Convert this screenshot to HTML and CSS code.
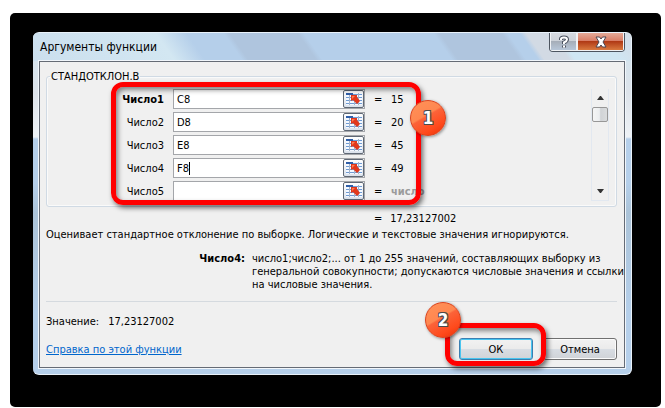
FILE: index.html
```
<!DOCTYPE html>
<html lang="ru">

<head>
  <title>Аргументы функции</title>
  <meta charset="UTF-8">
  <meta name="viewport" content="width=device-width, initial-scale=1">
  <link rel="stylesheet" href="styles.css">
</head>

<body>
  <svg class="defs" width="0" height="0" aria-hidden="true">
    <symbol id="ref" viewBox="0 0 16 12">
      <rect width="16" height="12" fill="#f4f8ff"/>
      <path d="M0 0h7v2H0z" fill="#2f5ea8"/>
      <path d="M7 1.5h9M0 4.5h16M0 7.5h16M0 10.5h16" stroke="#6f9bd3"/>
      <path d="M3.5 2v10M8.500 2v10M12.500 0v12" stroke="#a3b4ca"/>
      <path d="M5 2h6v2l3 4-3 3-4-4-2 1z" fill="#e2381c"/>
      <path d="M6 3h3l-3 3z" fill="#ff7c50"/>
    </symbol>
  </svg>

  <main class="desktop">
    <section class="dialog">
      <header class="titlebar">
        <h1>Аргументы функции</h1>
        <div class="window-buttons">
          <button class="help" aria-label="Справка">
            <svg width="12" height="14" viewBox="0 0 12 14"><path d="M3 5V4q0-1.500 3-1.500t3 2q0 1.500-3 3V9M6 10.500v2" fill="none" stroke="#4b5260" stroke-width="4"/><path d="M3 5V4q0-1.500 3-1.500t3 2q0 1.500-3 3V9M6 10.500v2" fill="none" stroke="#fff" stroke-width="2"/></svg>
          </button>
          <button class="close" aria-label="Закрыть">
            <svg width="14" height="12" viewBox="0 0 14 12"><path d="M2 1h3.500L7 3l1.500-2H12L9 6l3 5H8.500L7 9l-1.500 2H2l3-5z" fill="#fff" stroke="#4d4652"/></svg>
          </button>
        </div>
      </header>

      <div class="client">
        <fieldset class="group">
          <legend>СТАНДОТКЛОН.В</legend>
          <div class="args">
            <div class="arg">
              <label class="required" for="n1">Число1</label>
              <div class="field"><input id="n1" type="text" value="C8"><button aria-label="Выбрать диапазон 1"><svg class="ref"><use href="#ref"/></svg></button></div>
              <span>=</span><output for="n1">15</output>
            </div>
            <div class="arg">
              <label for="n2">Число2</label>
              <div class="field"><input id="n2" type="text" value="D8"><button aria-label="Выбрать диапазон 2"><svg class="ref"><use href="#ref"/></svg></button></div>
              <span>=</span><output for="n2">20</output>
            </div>
            <div class="arg">
              <label for="n3">Число3</label>
              <div class="field"><input id="n3" type="text" value="E8"><button aria-label="Выбрать диапазон 3"><svg class="ref"><use href="#ref"/></svg></button></div>
              <span>=</span><output for="n3">45</output>
            </div>
            <div class="arg">
              <label for="n4">Число4</label>
              <div class="field"><input id="n4" type="text" value="F8"><i class="caret"></i><button aria-label="Выбрать диапазон 4"><svg class="ref"><use href="#ref"/></svg></button></div>
              <span>=</span><output for="n4">49</output>
            </div>
            <div class="arg">
              <label for="n5">Число5</label>
              <div class="field"><input id="n5" type="text"><button aria-label="Выбрать диапазон 5"><svg class="ref"><use href="#ref"/></svg></button></div>
              <span>=</span><output class="empty" for="n5">число</output>
            </div>
            <div class="mark mark-args"><b class="badge">1</b></div>
          </div>
          <div class="scrollbar">
            <button aria-label="Вверх"><svg width="7" height="4" viewBox="0 0 7 4"><path d="M0 4l3-4h1l3 4z" fill="#333"/></svg></button>
            <div class="thumb"></div>
            <button class="down" aria-label="Вниз"><svg width="7" height="4" viewBox="0 0 7 4"><path d="M0 0l3 4h1l3-4z" fill="#333"/></svg></button>
          </div>
        </fieldset>

        <div class="total"><span>=</span><output>17,23127002</output></div>
        <p class="about">Оценивает стандартное отклонение по выборке. Логические и текстовые значения игнорируются.</p>
        <div class="hint">
          <b>Число4:</b>
          <p>число1;число2;... от 1 до 255 значений, составляющих выборку из<br>генеральной совокупности; допускаются числовые значения и ссылки<br>на числовые значения.</p>
        </div>

        <div class="value"><span>Значение:</span><output>17,23127002</output></div>
        <footer class="footer">
          <a href="#">Справка по этой функции</a>
          <div class="actions">
            <div class="ok-wrap">
              <button class="btn btn-ok">ОК</button>
              <div class="mark mark-ok"><b class="badge">2</b></div>
            </div>
            <button class="btn">Отмена</button>
          </div>
        </footer>
      </div>
    </section>
  </main>
</body>
</html>
```
FILE: styles.css
```
*{
  box-sizing:border-box;
}

body{
  margin:0;
  padding:13px 4px 1px 10px;
  background:#fff;
  color:#000;
  font:11px/13px "DejaVu Sans Condensed", "DejaVu Sans", sans-serif;
}

button,
input{
  font:inherit;
  color:inherit;
  margin:0;
  padding:0;
}

p{
  margin:0;
}

.defs{
  position:absolute;
}

.desktop{
  padding:19px 29px 32px 23px;
  background:#000;
  border-radius:5px;
}

.dialog{
  padding:0 6px 6px;
  border:1px solid #e9f2fa;
  border-width:1px 1px 1px 0;
  border-radius:6px;
  background:linear-gradient(to bottom, #d0e4f0 0, #dde3ea 60px, #eef2f6 104px, #b5cfea 106px, #b5cfea 150px, #abc3d8 180px, #b5cfea 280px);
}

/* title bar */
.titlebar{
  display:flex;
  justify-content:space-between;
  height:28px;
  margin:0 -6px;
  padding:0 6px 0 7px;
  border-radius:5px 5px 0 0;
  background:linear-gradient(55deg, #cbdfee 0, #d3e7f2 23%, #b5cfea 28%, #b5cfea 34%, #afc5de 35%, #afc5de 46%, #b5cfea 47%, #b5cfea 68%, #afc5de 69%, #afc5de 79%, #b5cfea 80%, #b5cfea 82%, #d2dae4 83%, #d2dae4 87%, #cfe6f3 88%, #cfe6f3 95%, #d5dce6 100%);
}
.titlebar h1{
  margin:0;
  font-size:12px;
  font-weight:normal;
  line-height:29px;
}

.window-buttons{
  display:flex;
  height:19px;
  border:1px solid #4d5560;
  border-top:0;
  border-radius:0 0 4px 4px;
  overflow:hidden;
}
.window-buttons button{
  display:flex;
  align-items:center;
  justify-content:center;
  border:1px solid #f0f2f5;
  border-top:0;
}
.help{
  width:27px;
  background:linear-gradient(#d6dae0 0, #cdd2d9 45%, #a6aeb9 50%, #b7c6d8 100%);
}
.close{
  width:47px;
  background:linear-gradient(#e5aa98 0, #d97f68 45%, #b13a16 50%, #d9793f 100%);
}

/* dialog body */
.client{
  padding:8px 7px 7px 6px;
  border:1px solid #656b75;
  box-shadow:0 0 0 1px #f1f6fb;
  background:#f0f0f0;
}

.group{
  display:flex;
  justify-content:space-between;
  min-width:0;
  margin:0;
  padding:6px 7px 5px 73px;
  border:1px solid #d0dae4;
  border-radius:3px;
  box-shadow:inset 0 0 0 1px #fafafa;
}
.group legend{
  height:13px;
  margin-left:-70px;
  padding:0 1px;
}

.args{
  position:relative;
  display:grid;
  gap:3px;
}
.arg{
  display:grid;
  grid-template-columns:44px 192px 8px 30px;
  column-gap:9px;
  align-items:center;
  height:20px;
}
.arg label{
  text-align:right;
}
.required{
  font-weight:bold;
}
.field{
  display:flex;
  align-items:center;
  height:20px;
  border:1px solid #a4a6aa;
  background:#fff;
}
.field input{
  flex:1;
  min-width:0;
  height:18px;
  padding-left:3px;
  border:0;
  outline:0;
  background:none;
}
.caret{
  position:absolute;
  left:69px;
  width:1px;
  height:13px;
  background:#000;
}
.field button{
  display:flex;
  align-items:center;
  justify-content:center;
  width:21px;
  height:18px;
  border:1px solid #5f6875;
  border-radius:2px;
  background:linear-gradient(#fff, #dbe2ec);
}
.ref{
  width:16px;
  height:12px;
}
.empty{
  color:#9b9b9b;
  font-weight:bold;
}

.scrollbar{
  display:flex;
  flex-direction:column;
  width:18px;
  border:1px solid #e2e8f0;
  border-top:0;
}
.scrollbar button{
  display:flex;
  align-items:center;
  justify-content:center;
  height:18px;
  border:0;
  background:none;
}
.scrollbar .down{
  margin-top:auto;
}
.thumb{
  height:15px;
  border:1px solid #979797;
  border-radius:2px;
  background:linear-gradient(to right, #f5f5f5 0, #eceef0 45%, #d0d3d6 55%, #dadcdd 100%);
}

.total{
  display:flex;
  gap:8px;
  margin-top:5px;
  padding-left:328px;
}
.about{
  margin-top:3px;
}
.hint{
  display:grid;
  grid-template-columns:199px 1fr;
  column-gap:7px;
  min-height:50px;
  margin-top:11px;
  border-bottom:1px solid #d5dadf;
}
.hint b{
  text-align:right;
}
.hint p{
  white-space:nowrap;
}
.value{
  display:flex;
  gap:9px;
  margin-top:13px;
}

.footer{
  display:flex;
  align-items:center;
  justify-content:space-between;
  margin-top:10px;
}
.footer a{
  color:#0066cc;
}
.actions{
  display:flex;
  gap:10px;
}
.ok-wrap{
  position:relative;
}
.btn{
  width:74px;
  height:22px;
  border:1px solid #707070;
  border-radius:3px;
  box-shadow:inset 0 0 0 1px #fbfbfb;
  background:linear-gradient(#f2f2f2 0, #ebebeb 48%, #d8dde3 52%, #d0d3d7 100%);
}
.btn-ok{
  border-color:#3c7fb1;
  box-shadow:inset 0 0 0 1px #48c5f0;
}

/* numbered callouts */
.mark{
  position:absolute;
  border:5px solid #f00;
  border-radius:12px;
  box-shadow:2px 3px 5px rgba(0,0,0,.55), inset 2px 3px 5px rgba(0,0,0,.45);
  pointer-events:none;
}
.mark-args{
  inset:-7px 0 -4px -9px;
}
.mark-ok{
  inset:-15px -13px -6px -14px;
}
.badge{
  position:absolute;
  display:flex;
  align-items:center;
  justify-content:center;
  width:36px;
  height:36px;
  border:1px solid #d9431e;
  border-radius:50%;
  background:linear-gradient(150deg, #ff9159 0, #ff8750 42%, #fb6339 46%, #ff4a1c 75%, #e83208 100%);
  box-shadow:1px 1px 3px rgba(0,0,0,.4);
  color:#fff;
  font-size:17px;
  text-shadow:-1px -1px #4a4a4a, 1px -1px #4a4a4a, -1px 1px #4a4a4a, 1px 1px #4a4a4a;
}
.mark-args .badge{
  top:13px;
  right:-30px;
}
.mark-ok .badge{
  top:-26px;
  left:-25px;
}
```
